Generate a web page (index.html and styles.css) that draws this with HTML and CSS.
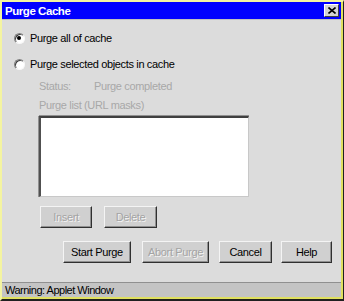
FILE: index.html
```html
<!DOCTYPE html>
<html lang="en">
<head>
    <meta charset="UTF-8">
    <title>Purge Cache</title>
    <link rel="stylesheet" href="styles.css">
</head>
<body>
    <div class="frame">
        <div class="titlebar">
            <span class="title">Purge Cache</span>
            <span class="close-btn">
                <svg width="8" height="7" viewBox="0 0 8 7">
                    <path d="M0.5 0.5 L7.5 6.5 M7.5 0.5 L0.5 6.5" stroke="#000" stroke-width="1.6" fill="none"/>
                </svg>
            </span>
        </div>

        <div class="client">
            <div class="radio-row first">
                <span class="radio checked"></span>
                <span>Purge all of cache</span>
            </div>
            <div class="radio-row">
                <span class="radio"></span>
                <span>Purge selected objects in cache</span>
            </div>

            <div class="sub">
                <div class="status-row">
                    <span class="label">Status:</span>
                    <span>Purge completed</span>
                </div>
                <div class="list-label">Purge list (URL masks)</div>
                <div class="listbox"></div>
                <div class="list-buttons">
                    <span class="btn disabled btn-insert">Insert</span>
                    <span class="btn disabled btn-delete">Delete</span>
                </div>
            </div>

            <div class="actions">
                <span class="btn btn-start">Start Purge</span>
                <span class="btn disabled btn-abort">Abort Purge</span>
                <span class="btn btn-cancel">Cancel</span>
                <span class="btn btn-help">Help</span>
            </div>

            <div class="warning">Warning: Applet Window</div>
        </div>
    </div>
</body>
</html>
```

FILE: styles.css
```css
* {
    margin: 0;
    padding: 0;
    box-sizing: border-box;
}

body {
    width: 344px;
    height: 301px;
    overflow: hidden;
    font-family: "Liberation Sans", Arial, sans-serif;
    font-size: 11px;
    letter-spacing: -0.35px;
    color: #000;
    background: #000;
}

.frame {
    width: 344px;
    height: 301px;
    background: #dcdcdc;
    border-top: 2px solid #f4f4a0;
    border-left: 2px solid #f4f4a0;
    border-right: 1px solid #202020;
    border-bottom: 2px solid #202020;
    box-shadow: inset -2px -2px 0 #e0e060;
    display: flex;
    flex-direction: column;
}

.titlebar {
    height: 17px;
    margin-right: 2px;
    background: #0000ff;
    display: flex;
    align-items: center;
    justify-content: space-between;
    padding: 0 2px 0 3px;
}

.title {
    color: #fff;
    font-weight: bold;
    font-size: 11.5px;
    letter-spacing: -0.45px;
}

.close-btn {
    width: 15px;
    height: 13px;
    background: #d4d4d4;
    border-top: 1px solid #fff;
    border-left: 1px solid #fff;
    border-right: 1px solid #404040;
    border-bottom: 1px solid #404040;
    display: flex;
    align-items: center;
    justify-content: center;
}

.client {
    flex: 1;
    margin-right: 2px;
    margin-bottom: 2px;
    border-top: 1px solid #c0c0c0;
    display: flex;
    flex-direction: column;
}

.radio-row {
    height: 26px;
    display: flex;
    align-items: center;
    gap: 5px;
    padding-left: 12px;
}

.radio-row.first {
    margin-top: 5px;
}

.radio {
    width: 11px;
    height: 11px;
    border-radius: 50%;
    background: #fff;
    border: 1px solid;
    border-color: #808080 #f8f8f8 #f8f8f8 #808080;
    box-shadow: inset 1px 1px 0 #404040;
    position: relative;
}

.radio.checked::after {
    content: "";
    position: absolute;
    left: 2px;
    top: 2px;
    width: 4px;
    height: 4px;
    border-radius: 50%;
    background: #000;
}

.sub {
    padding-left: 37px;
    color: #a8a8a8;
}

.status-row {
    height: 20px;
    margin-top: -1px;
    display: flex;
    align-items: center;
}

.status-row .label {
    width: 55px;
}

.list-label {
    height: 16px;
    margin-top: 1px;
    display: flex;
    align-items: center;
}

.listbox {
    width: 210px;
    height: 81px;
    margin-top: 3px;
    background: #fff;
    border-top: 2px solid;
    border-left: 2px solid;
    border-color: #404040 transparent transparent #505050;
    border-right: 1px solid #c8c8c8;
    border-bottom: 1px solid #c8c8c8;
    box-shadow: 0 -1px 0 #909090, -1px 0 0 #909090;
}

.list-buttons {
    display: flex;
    gap: 12px;
    margin-top: 9px;
    padding-left: 1px;
}

.btn {
    height: 22px;
    display: flex;
    align-items: center;
    justify-content: center;
    background: #d0d0d0;
    border-top: 1px solid #f4f4f4;
    border-left: 1px solid #f4f4f4;
    border-right: 1px solid #303030;
    border-bottom: 1px solid #303030;
    box-shadow: inset -1px -1px 0 #909090;
    color: #000;
}

.btn.disabled {
    color: #a4a4a4;
    text-shadow: 1px 1px 0 #f4f4f4;
}

.btn-insert { width: 52px; }
.btn-delete { width: 53px; }
.btn-start { width: 68px; }
.btn-abort { width: 67px; }
.btn-cancel { width: 53px; }
.btn-help { width: 51px; }

.actions {
    display: flex;
    gap: 11px;
    margin-top: 13px;
    padding-left: 61px;
}

.actions .btn-cancel {
    margin-left: -1px;
}

.actions .btn-help {
    margin-left: -2px;
}

.warning {
    margin-top: auto;
    height: 15px;
    background: #c4c4c4;
    border-top: 1px solid #909090;
    padding-left: 3px;
    display: flex;
    align-items: center;
    letter-spacing: -0.5px;
}
```
